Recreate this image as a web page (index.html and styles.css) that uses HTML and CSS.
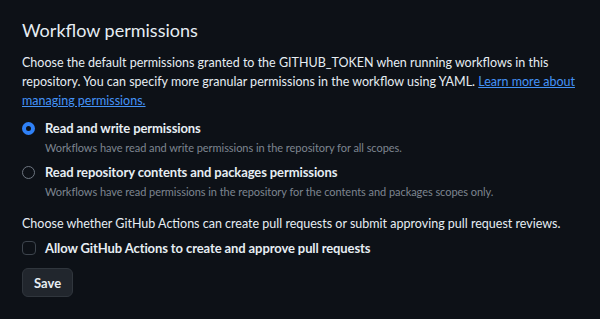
FILE: index.html
```html
<!DOCTYPE html>
<html lang="en">
<head>
  <meta charset="UTF-8" />
  <title>Workflow permissions</title>
  <link rel="stylesheet" href="styles.css">
</head>
<body>
  <div class="settings">
    <h2 class="subhead">Workflow permissions</h2>
    <p class="intro">Choose the default permissions granted to the GITHUB_TOKEN when running workflows in this repository. You can specify more granular permissions in the workflow using YAML. <a href="#">Learn more about managing permissions.</a></p>

    <!-- token permission choices -->
    <div class="choice">
      <input type="radio" name="perm" id="perm-write" checked>
      <div>
        <label for="perm-write">Read and write permissions</label>
        <p class="note">Workflows have read and write permissions in the repository for all scopes.</p>
      </div>
    </div>
    <div class="choice">
      <input type="radio" name="perm" id="perm-read">
      <div>
        <label for="perm-read">Read repository contents and packages permissions</label>
        <p class="note">Workflows have read permissions in the repository for the contents and packages scopes only.</p>
      </div>
    </div>

    <p class="intro second">Choose whether GitHub Actions can create pull requests or submit approving pull request reviews.</p>
    <div class="choice">
      <input type="checkbox" id="allow-pr">
      <label for="allow-pr">Allow GitHub Actions to create and approve pull requests</label>
    </div>

    <button class="btn">Save</button>
  </div>
</body>
</html>
```

FILE: styles.css
```css
/* page */
body {
  margin: 0;
  background: #0d1117;
  color: #e6edf3;
  font-family: Lato, sans-serif;
  font-size: 12.5px;
}
.settings {
  padding: 16px 12px 0 22px;
}
.subhead {
  margin: 0 0 9px;
  font-size: 18px;
  font-weight: 400;
  line-height: 28px;
}
.intro {
  margin: 0 0 8px;
  line-height: 19px;
}
.intro a {
  color: #4493f8;
  text-decoration: underline;
}
.intro.second {
  margin-top: 13px;
  margin-bottom: 5px;
}

/* radio + checkbox rows */
.choice {
  display: flex;
  align-items: flex-start;
  gap: 9px;
  margin-bottom: 5px;
}
.choice label {
  font-size: 13px;
  font-weight: 700;
  line-height: 20px;
  letter-spacing: -0.1px;
}
.note {
  margin: 0;
  font-size: 11px;
  color: #7d8590;
  line-height: 19px;
  letter-spacing: -0.05px;
}
.choice input {
  appearance: none;
  margin: 3px 0 0;
  width: 14px;
  height: 14px;
  flex: none;
  border: 1px solid #6e7681;
  background: #0d1117;
}
.choice input[type=radio] {
  margin: 4px 1px 0 0;
  width: 13px;
  height: 13px;
  border-radius: 50%;
}
.choice input[type=radio]:checked {
  border: 4px solid #2f81f7;
}
.choice input[type=checkbox] {
  border-color: #3d444d;
  border-radius: 4px;
}

/* button */
.btn {
  display: block;
  margin-top: 10px;
  padding: 0 11px;
  height: 29px;
  background: #21262d;
  color: #e6edf3;
  border: 1px solid #30363d;
  border-radius: 6px;
  font-family: inherit;
  font-size: 13px;
  font-weight: 700;
}
```
